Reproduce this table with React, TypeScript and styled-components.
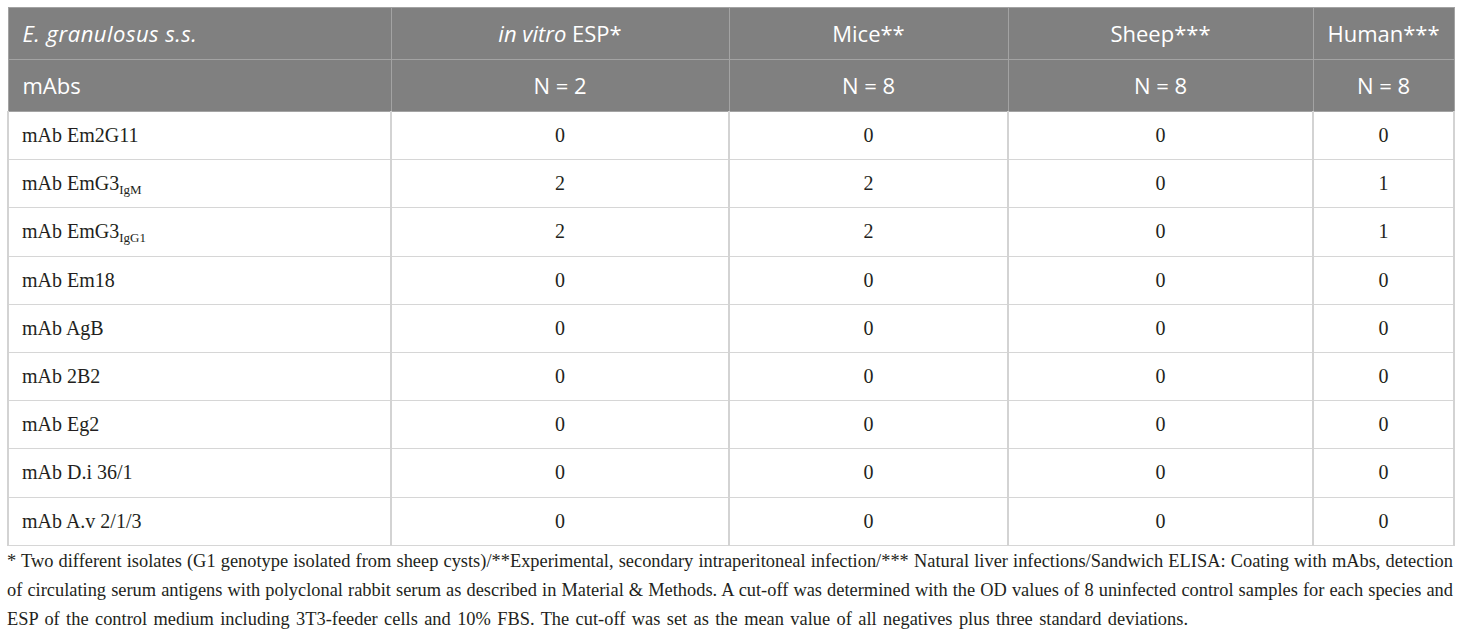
import React from "react";
import styled, { createGlobalStyle } from "styled-components";

const Global = createGlobalStyle`
  html, body { margin: 0; padding: 0; background: #ffffff; }
  body { font-family: "Liberation Serif", serif; color: #231f20; }
`;

const Page = styled.div`
  padding: 7px 7px 0 7px;
  width: 1446px;
`;

const Table = styled.table`
  width: 1446px;
  border-collapse: collapse;
  table-layout: fixed;
  border: 1px solid #c9c9c9;
`;

const HeadRow = styled.tr`
  background: #808080;
  height: ${(p: { $h: number }) => p.$h}px;
`;

const HeadCell = styled.th<{ $left?: boolean }>`
  font-family: "Open Sans", "Liberation Sans", sans-serif;
  font-weight: 400;
  font-size: 22px;
  color: #ffffff;
  text-align: ${(p) => (p.$left ? "left" : "center")};
  padding: 0 0 2px ${(p) => (p.$left ? "14px" : "0")};
  border: 1px solid #a3a3a3;
  vertical-align: middle;
  white-space: nowrap;
`;

const Ital = styled.i`
  letter-spacing: 0.5px;
`;

const BodyRow = styled.tr`
  height: 48.2px;
`;

const BodyCell = styled.td<{ $left?: boolean }>`
  font-family: "Liberation Serif", serif;
  font-size: 20px;
  color: #231f20;
  text-align: ${(p) => (p.$left ? "left" : "center")};
  padding: 0 0 0 ${(p) => (p.$left ? "13px" : "0")};
  border-top: 1px solid #d6d6d6;
  border-bottom: 1px solid #d6d6d6;
  border-left: 2px solid #d3d3d3;
  border-right: 2px solid #d3d3d3;
  vertical-align: middle;
`;

const Sub = styled.sub`
  font-size: 13px;
  vertical-align: -4px;
  line-height: 0;
`;

const Footnote = styled.div`
  margin-top: 1px;
  font-family: "Liberation Serif", serif;
  font-size: 18.4px;
  line-height: 29px;
  color: #231f20;
`;

const FootLine = styled.div<{ $last?: boolean }>`
  text-align: justify;
  text-align-last: ${(p) => (p.$last ? "left" : "justify")};
  word-spacing: ${(p) => (p.$last ? "1.8px" : "0")};
  white-space: nowrap;
`;

type Row = { label: React.ReactNode; vals: string[] };

const rows: Row[] = [
  { label: "mAb Em2G11", vals: ["0", "0", "0", "0"] },
  { label: <>mAb EmG3<Sub>IgM</Sub></>, vals: ["2", "2", "0", "1"] },
  { label: <>mAb EmG3<Sub>IgG1</Sub></>, vals: ["2", "2", "0", "1"] },
  { label: "mAb Em18", vals: ["0", "0", "0", "0"] },
  { label: "mAb AgB", vals: ["0", "0", "0", "0"] },
  { label: "mAb 2B2", vals: ["0", "0", "0", "0"] },
  { label: "mAb Eg2", vals: ["0", "0", "0", "0"] },
  { label: "mAb D.i 36/1", vals: ["0", "0", "0", "0"] },
  { label: "mAb A.v 2/1/3", vals: ["0", "0", "0", "0"] },
];

export default function App() {
  return (
    <Page>
      <Global />
      <Table>
        <colgroup>
          <col style={{ width: 383 }} />
          <col style={{ width: 338 }} />
          <col style={{ width: 279 }} />
          <col style={{ width: 305 }} />
          <col style={{ width: 141 }} />
        </colgroup>
        <thead>
          <HeadRow $h={52}>
            <HeadCell $left>
              <Ital>E. granulosus s.s.</Ital>
            </HeadCell>
            <HeadCell>
              <i>in vitro</i> ESP*
            </HeadCell>
            <HeadCell>Mice**</HeadCell>
            <HeadCell>Sheep***</HeadCell>
            <HeadCell>Human***</HeadCell>
          </HeadRow>
          <HeadRow $h={52}>
            <HeadCell $left>mAbs</HeadCell>
            <HeadCell>N = 2</HeadCell>
            <HeadCell>N = 8</HeadCell>
            <HeadCell>N = 8</HeadCell>
            <HeadCell>N = 8</HeadCell>
          </HeadRow>
        </thead>
        <tbody>
          {rows.map((r, i) => (
            <BodyRow key={i}>
              <BodyCell $left>{r.label}</BodyCell>
              {r.vals.map((v, j) => (
                <BodyCell key={j}>{v}</BodyCell>
              ))}
            </BodyRow>
          ))}
        </tbody>
      </Table>
      <Footnote>
        <FootLine>
          * Two different isolates (G1 genotype isolated from sheep cysts)/**Experimental, secondary intraperitoneal infection/*** Natural liver infections/Sandwich ELISA: Coating with mAbs, detection
        </FootLine>
        <FootLine>
          of circulating serum antigens with polyclonal rabbit serum as described in Material &amp; Methods. A cut-off was determined with the OD values of 8 uninfected control samples for each species and
        </FootLine>
        <FootLine $last>
          ESP of the control medium including 3T3-feeder cells and 10% FBS. The cut-off was set as the mean value of all negatives plus three standard deviations.
        </FootLine>
      </Footnote>
    </Page>
  );
}
